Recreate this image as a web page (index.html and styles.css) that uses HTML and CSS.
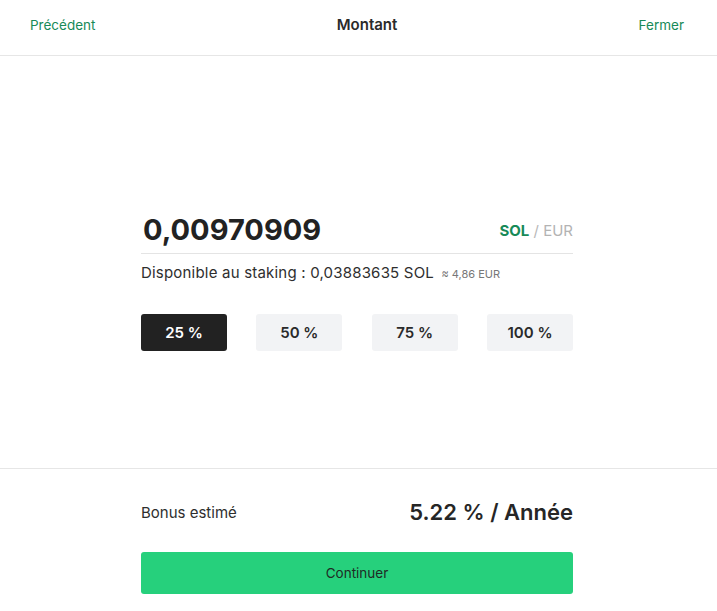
FILE: index.html
```html
<!doctype html>
<html lang="fr">
<head>
	<meta charset="utf-8">
	<title>Montant</title>
	<link rel="stylesheet" href="styles.css">
</head>
<body>
	<header class="topbar">
		<a class="link" href="#">Précédent</a>
		<span class="title">Montant</span>
		<a class="link" href="#">Fermer</a>
	</header>

	<section class="amount-area">
		<div class="panel">
			<div class="amount-row">
				<span class="amount">0,00970909</span>
				<span class="units"><b class="unit-on">SOL</b> / <span class="unit-off">EUR</span></span>
			</div>
			<p class="available">Disponible au staking : 0,03883635 SOL <small>≈ 4,86 EUR</small></p>
			<div class="presets">
				<button class="preset active">25 %</button>
				<button class="preset">50 %</button>
				<button class="preset">75 %</button>
				<button class="preset">100 %</button>
			</div>
		</div>
	</section>

	<section class="summary">
		<div class="panel">
			<div class="bonus-row">
				<span class="bonus-label">Bonus estimé</span>
				<span class="bonus-value">5.22 % / Année</span>
			</div>
			<button class="continue">Continuer</button>
		</div>
	</section>
</body>
</html>
```

FILE: styles.css
```css
* {
	margin: 0;
	padding: 0;
	box-sizing: border-box;
}

body {
	font-family: Inter, "Noto Sans", sans-serif;
	color: #262626;
	background: #fff;
}

.topbar {
	height: 56px;
	display: flex;
	align-items: center;
	justify-content: space-between;
	padding: 0 33px 6px 30px;
	border-bottom: 1px solid #e6e6e6;
}
.link {
	color: #178a58;
	font-size: 13.5px;
	text-decoration: none;
}
.title {
	font-size: 15px;
	font-weight: 600;
	color: #2a2a2a;
}

/* centred column, a touch left of the middle like the original */
.amount-area,
.summary {
	padding-right: 3px;
}
.panel {
	width: 432px;
	margin: 0 auto;
}

.amount-area {
	height: 413px;
	padding-top: 156px;
	border-bottom: 1px solid #e6e6e6;
}
.amount-row {
	display: flex;
	justify-content: space-between;
	align-items: center;
	padding: 0 0 5px 2px;
	border-bottom: 1px solid #e4e4e4;
}
.amount {
	font-size: 29px;
	line-height: 36px;
	font-weight: 700;
	color: #222;
}
.units {
	font-size: 15px;
	color: #b8b8b8;
}
.unit-on {
	color: #178a58;
	font-weight: 700;
}
.unit-off {
	color: #b3b3b3;
}

.available {
	margin-top: 9px;
	font-size: 15px;
	line-height: 20px;
	letter-spacing: 0.2px;
	color: #2e2e2e;
}
.available small {
	font-size: 11px;
	letter-spacing: 0;
	color: #777;
	margin-left: 3px;
}

.presets {
	margin-top: 30px;
	display: grid;
	grid-template-columns: repeat(4, 86px);
	justify-content: space-between;
}
.preset {
	height: 37px;
	border: none;
	border-radius: 3px;
	background: #f2f3f5;
	font-family: inherit;
	font-size: 15px;
	font-weight: 600;
	color: #2a2a2a;
}
.preset.active {
	background: #222;
	color: #fff;
}

.summary {
	padding-top: 28px;
}
.bonus-row {
	display: flex;
	justify-content: space-between;
	align-items: center;
	height: 30px;
}
.bonus-label {
	font-size: 15px;
	color: #2e2e2e;
}
.bonus-value {
	font-size: 22px;
	font-weight: 600;
	color: #262626;
}
.continue {
	display: block;
	width: 100%;
	height: 42px;
	margin-top: 25px;
	border: none;
	border-radius: 3px;
	background: #26d07c;
	font-family: inherit;
	font-size: 13.5px;
	color: #1f2b25;
}
```
